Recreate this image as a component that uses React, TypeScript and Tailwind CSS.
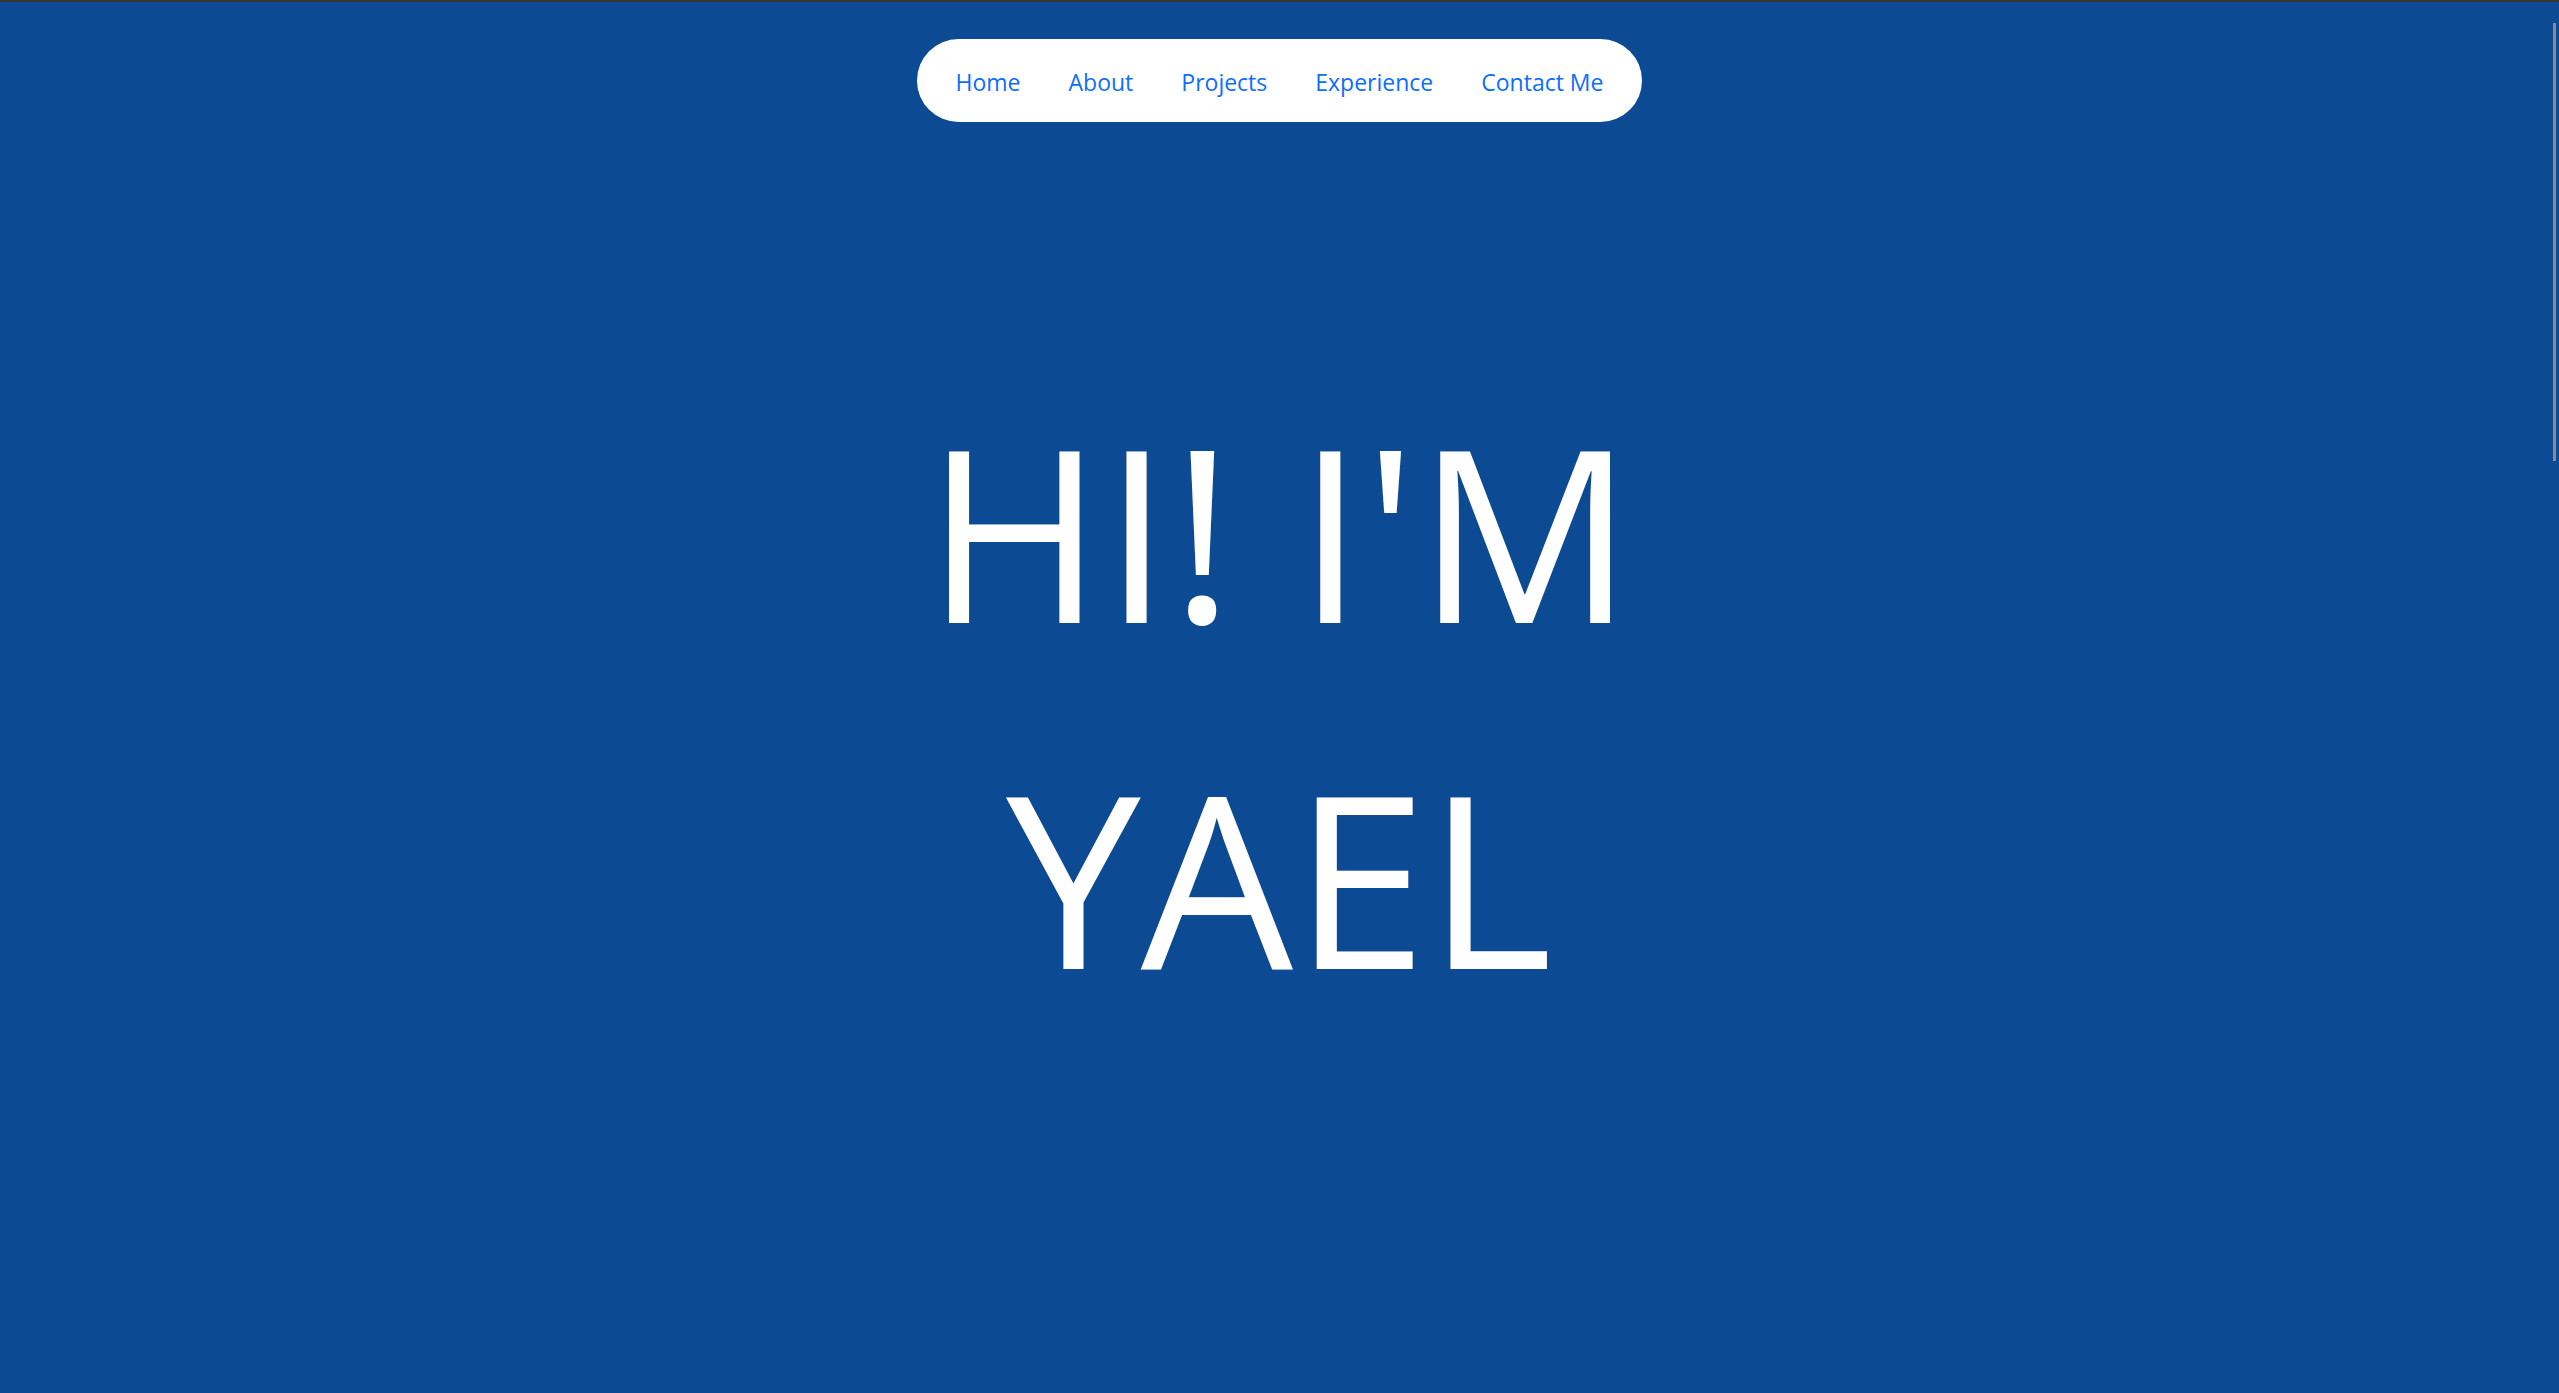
const LINKS = ["Home", "About", "Projects", "Experience", "Contact Me"];

export default function App() {
  return (
    <div
      className="relative h-screen overflow-hidden bg-[#0d4a94] border-t-[2px] border-[#363636]"
      style={{ fontFamily: '"Open Sans", "Noto Sans", sans-serif' }}
    >
      <nav className="flex justify-center pt-[37px]">
        <ul className="flex items-center h-[83px] px-[15px] bg-white rounded-[42px]">
          {LINKS.map((l) => (
            <li key={l}>
              <a href="#" className="block px-6 pt-[4px] text-[23px] leading-none text-[#0d6efd]">
                {l}
              </a>
            </li>
          ))}
        </ul>
      </nav>

      <h1 className="mt-[235px] text-center text-white text-[241px] leading-[346px] font-normal">
        HI! I'M
        <br />
        YAEL
      </h1>

      <div className="absolute right-[3px] top-[21px] w-[3px] h-[438px] bg-[#8a8a8a]" />
    </div>
  );
}
